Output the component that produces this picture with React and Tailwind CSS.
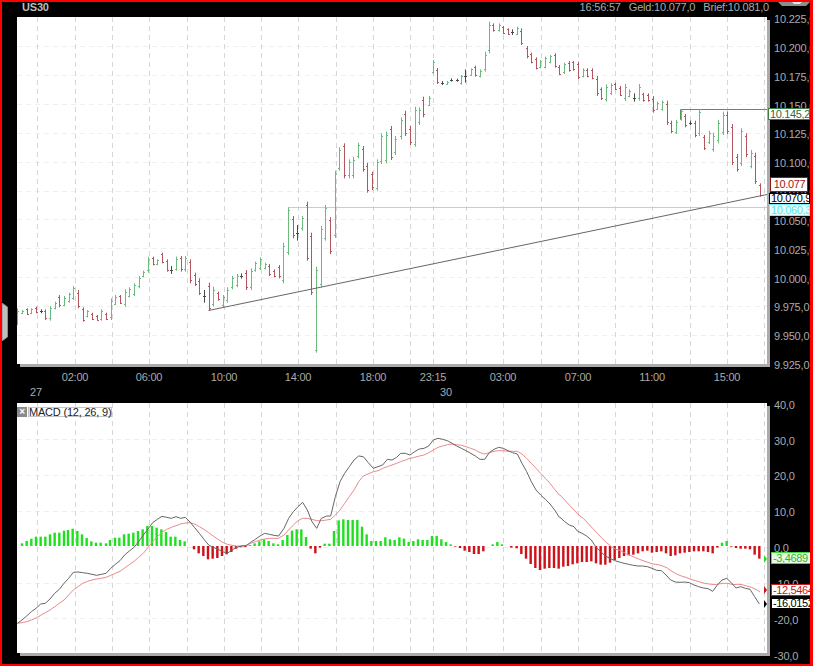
const gridX = [37, 75, 112, 149, 187, 224, 261, 298, 336, 373, 410, 433, 466, 503, 541, 578, 615, 652, 690, 727, 764];
const gridYTop = [46, 75, 104, 133, 162, 191, 219, 248, 277, 306, 335];
const gridYBottom = [439, 475, 511, 547, 583, 618];

// read off the 3x crops: [x, top, bottom, colour]
const barsA = [
  [52,325,375,"g"],[66,330,342,"g"],[80,325,345,"r"],[94,325,342,"g"],[108,320,340,"r"],[122,328,340,"k"],[136,328,360,"r"],[150,318,362,"g"],
  [164,305,328,"g"],[178,285,322,"r"],[192,288,318,"g"],[206,278,308,"g"],[220,258,300,"g"],[234,270,325,"r"],[248,322,365,"r"],[262,330,352,"g"],
  [276,338,360,"r"],[290,345,362,"r"],[304,328,362,"g"],[318,338,360,"r"],[332,295,360,"g"],[346,285,315,"g"],[360,285,312,"r"],[374,268,320,"g"],
  [388,262,292,"g"],[402,250,288,"g"],[416,228,265,"g"],[430,212,232,"g"],[444,170,218,"g"],[458,170,196,"r"],[472,178,196,"g"],[486,158,190,"r"],
  [500,178,215,"r"],[514,198,222,"k"],[528,170,212,"g"],[542,168,215,"r"],[556,168,215,"g"],[570,178,250,"r"],[584,218,258,"r"],[598,235,285,"r"],
  [612,270,308,"k"],[626,248,332,"r"],[640,260,320,"g"],[654,275,302,"r"],[668,285,322,"g"],[682,262,308,"g"],[696,228,268,"g"],[710,222,262,"g"],
  [724,220,236,"k"],[738,210,270,"r"],[752,205,270,"g"],[766,185,215,"g"],[780,172,210,"g"],[794,188,208,"g"],[808,192,228,"r"],[822,208,232,"r"],
  [836,195,235,"r"],[850,128,250,"g"],[864,22,165,"g"],[878,48,115,"r"],[892,75,122,"k"],[906,48,92,"g"],[920,5,182,"r"],[934,98,285,"r"],
  [948,200,458,"g"],[962,78,262,"g"],[976,15,122,"g"],[990,52,162,"r"],
];
const barsB = [
  [194,512,714,"g"],[208,442,512,"g"],[222,430,535,"r"],[236,478,535,"g"],[250,470,535,"g"],[264,428,475,"g"],[278,438,515,"r"],[292,488,578,"r"],
  [306,515,570,"r"],[320,478,572,"g"],[334,400,492,"g"],[348,395,490,"g"],[362,378,480,"r"],[376,408,465,"g"],[392,352,418,"g"],[406,332,408,"r"],
  [420,378,435,"r"],[434,320,440,"g"],[448,322,375,"g"],[460,290,352,"r"],[476,288,318,"g"],[490,180,222,"g"],[502,204,252,"r"],[517,243,255,"k"],
  [532,243,254,"g"],[544,235,245,"k"],[560,236,245,"k"],[574,225,254,"g"],[586,208,248,"k"],[602,205,228,"g"],[616,197,230,"r"],[630,208,232,"g"],
  [644,155,215,"g"],[658,65,160,"g"],[670,70,95,"r"],[686,70,95,"g"],[700,78,102,"r"],[713,85,105,"r"],[727,88,105,"k"],[742,80,105,"g"],
  [754,85,135,"r"],[770,138,175,"r"],[784,158,190,"r"],[797,172,208,"r"],
];
const barsC = [
  [0,180,205,"g"],[16,170,205,"g"],[30,165,190,"g"],[44,160,203,"r"],[58,195,225,"r"],[72,188,222,"g"],[86,183,215,"r"],[100,183,212,"r"],
  [114,185,238,"r"],[128,205,232,"g"],[142,205,232,"r"],[156,205,238,"r"],[170,228,288,"r"],[184,262,300,"r"],[198,253,305,"g"],[212,250,285,"g"],
  [226,248,270,"r"],[240,258,288,"r"],[254,252,303,"g"],[268,268,292,"g"],[282,280,305,"k"],[296,252,302,"g"],[310,278,305,"r"],[324,280,305,"r"],
  [338,288,338,"r"],[352,305,330,"g"],[366,302,332,"g"],[380,302,375,"r"],[394,362,400,"r"],[408,360,402,"g"],[422,328,362,"g"],[436,342,382,"r"],
  [450,362,375,"k"],[464,362,412,"r"],[478,328,408,"g"],[492,405,450,"r"],[506,392,432,"g"],[520,398,455,"g"],[534,360,430,"g"],[548,335,405,"g"],
  [562,335,402,"r"],[576,372,495,"r"],[590,462,515,"r"],[604,385,498,"g"],[618,400,472,"r"],[632,450,505,"g"],[646,458,552,"r"],[660,550,590,"r"],
];

const histA = [
  [66,8],[80,15],[94,22],[108,28],[122,28],[136,28],[150,35],[164,40],[178,40],[192,46],[204,48],[218,52],[232,45],[246,35],[260,24],[274,14],[288,10],[302,10],[318,8],[330,18],
  [345,25],[358,25],[372,35],[386,37],[400,40],[414,45],[428,50],[442,60],[456,60],[470,55],[484,50],[498,42],[512,28],[526,28],[540,18],[554,14],[582,-10],[596,-22],[610,-30],
  [624,-40],[638,-38],[652,-36],[666,-30],[680,-25],[694,-18],[708,-8],[722,-4],[736,-3],[750,3],[764,8],[778,14],[792,20],[806,15],[820,8],[834,5],
];
const histB = [
  [8,18],[22,33],[36,46],[50,50],[64,50],[78,27],[92,-8],[106,-22],[120,-5],[134,7],[148,7],[162,45],[176,77],[190,80],[204,78],[218,78],[232,78],[246,58],[260,35],[274,15],
  [288,15],[302,15],[316,26],[330,20],[344,18],[358,26],[372,22],[386,12],[400,15],[414,20],[428,18],[442,18],[456,30],[470,30],[484,20],[498,12],[512,5],[526,-2],[540,-6],
  [554,-14],[568,-18],[582,-24],[596,-24],[610,-16],[638,5],[652,12],[666,5],[694,-5],[710,-7],[724,-24],[738,-38],[752,-54],[766,-66],[780,-72],[794,-68],[808,-66],[822,-66],[836,-68],
];
const histC = [
  [10,-62],[24,-60],[38,-55],[52,-52],[66,-48],[80,-48],[94,-46],[108,-52],[122,-56],[136,-56],[150,-50],[164,-42],[178,-36],[192,-30],[206,-28],[220,-26],[234,-22],[248,-16],
  [262,-14],[276,-20],[290,-18],[304,-16],[318,-22],[332,-30],[346,-28],[360,-22],[374,-20],[388,-18],[402,-16],[416,-16],[430,-16],[444,-18],[458,-22],[472,-5],[486,10],[500,15],
  [514,-2],[528,-6],[542,-8],[556,-8],[570,-10],[584,-26],[598,-38],
];

const macdA = "52,580 66,570 80,558 94,545 108,535 122,522 136,520 150,507 164,490 178,478 192,460 206,445 220,427 234,426 248,428 262,430 276,433 290,436 304,433 318,430 332,415 346,403 360,392 374,375 388,363 402,352 416,335 430,315 444,297 458,278 472,268 486,259 500,262 514,265 528,260 542,265 556,262 570,276 584,293 598,310 612,328 626,345 640,352 654,358 668,365 682,370 696,360 710,352 724,348 738,347 752,337 766,328 780,318 794,310 808,313 822,316 836,318";
const macdB = "0,312 12,295 26,265 40,245 54,230 68,217 82,240 96,275 110,295 124,265 140,258 152,258 166,200 180,155 194,130 208,110 222,90 236,78 250,80 264,97 280,115 294,110 308,105 322,88 336,90 350,82 362,70 376,70 390,75 404,65 418,57 432,55 446,48 460,30 474,25 488,28 502,32 516,40 530,48 544,55 558,62 572,70 586,78 600,88 614,88 628,68 642,58 656,52 670,55 684,62 698,68 712,72 726,100 740,125 754,155 768,180 782,195 796,208 810,222 824,240 838,262";
const macdC = "0,262 14,275 28,285 42,290 52,303 66,310 80,318 94,330 108,352 122,365 136,378 150,385 164,392 178,396 192,400 206,403 220,406 234,408 248,408 262,410 276,415 290,421 304,422 318,435 332,450 346,456 360,457 374,456 388,458 402,465 416,470 430,474 444,476 458,484 472,465 486,450 500,445 514,458 528,474 542,470 556,475 570,478 584,500 598,522";
const signalA = "52,580 66,578 80,575 94,570 108,564 122,556 136,548 150,540 164,530 178,520 192,510 206,495 220,480 234,470 248,460 262,454 276,450 290,447 304,445 318,442 332,436 346,430 360,424 374,414 388,404 402,394 416,382 430,370 444,352 458,335 472,320 486,307 500,298 514,292 528,287 542,282 556,279 570,278 584,282 598,290 612,298 626,308 640,318 654,328 668,337 682,343 696,346 710,348 724,348 738,347 752,340 766,335 780,330 794,327 808,325 822,325 836,325";
const signalB = "0,322 12,315 26,300 40,285 54,272 68,265 82,265 96,268 110,272 124,272 140,270 152,268 166,255 180,240 194,220 208,200 222,180 236,155 250,138 264,132 280,125 294,122 308,115 322,110 336,105 350,100 362,95 376,90 390,85 404,82 418,78 432,75 446,68 460,60 474,52 488,48 502,44 516,42 530,44 544,46 558,50 572,55 586,60 600,68 614,72 628,68 642,64 656,62 670,62 684,64 698,64 712,64 726,72 740,85 754,100 768,115 782,130 796,145 810,160 824,178 838,195";
const signalC = "0,195 14,210 28,225 42,240 56,255 70,265 84,280 98,295 112,310 126,325 140,338 154,350 168,358 182,362 196,370 210,376 224,382 238,388 252,393 266,398 280,402 294,404 308,408 322,414 336,424 350,432 364,438 378,442 392,448 406,452 420,456 434,460 448,462 462,464 476,462 490,460 504,460 518,464 532,463 546,464 560,468 574,472 588,478 600,486";

const barColors = { g: "#6cba7c", r: "#b4555e", k: "#4a4a4a" };

function toPage(list, ox, oy) {
  return list.split(" ").map((pair) => {
    const [x, y] = pair.split(",").map(Number);
    return `${ox + x / 3},${oy + y / 3}`;
  });
}

function Grid({ ys, top, bottom }) {
  return (
    <g fill="none" strokeWidth="1" strokeDasharray="5 4" shapeRendering="crispEdges">
      {ys.map((y) => (
        <line key={y} x1="17" x2="767" y1={y + 0.5} y2={y + 0.5} stroke="#efefef" />
      ))}
      {gridX.map((x) => (
        <line key={x} x1={x + 0.5} x2={x + 0.5} y1={top} y2={bottom} stroke="#d6d6d6" />
      ))}
    </g>
  );
}

function Bars({ list, ox, oy }) {
  return list.map(([zx, zt, zb, c]) => {
    const x = Math.round(ox + zx / 3) + 0.5;
    const top = oy + zt / 3;
    const bottom = oy + zb / 3;
    const wick = Math.min(3, (bottom - top) * 0.15);
    const open = c === "g" ? bottom - wick : c === "r" ? top + wick : (top + bottom) / 2;
    const close = c === "g" ? top + wick : c === "r" ? bottom - wick : (top + bottom) / 2;
    return (
      <path
        key={`${ox}-${zx}`}
        d={`M${x} ${top}V${bottom}M${x - 1.5} ${Math.round(open) + 0.5}H${x}M${x} ${Math.round(close) + 0.5}H${x + 1.5}`}
        stroke={barColors[c]}
        fill="none"
      />
    );
  });
}

function Hist({ list, ox }) {
  return list.map(([zx, h]) => {
    const px = Math.abs(h) / 3;
    return (
      <rect
        key={`${ox}-${zx}`}
        x={ox + zx / 3 - 1.2}
        y={h > 0 ? 546 - px : 546}
        width="2.4"
        height={px}
        fill={h > 0 ? "#1fe01f" : "#cf1018"}
      />
    );
  });
}

function PriceChart() {
  return (
    <svg viewBox="17 17 750 347" className="block h-full w-full">
      <Grid ys={gridYTop} top={17} bottom={364} />
      <path d="M288.5 238V207.5H767" fill="none" stroke="#7aeef4" />
      <path d="M680.5 120V109.5H767" fill="none" stroke="#4d9a58" />
      <Bars list={barsA} ox={0} oy={200} />
      <Bars list={barsB} ox={270} oy={0} />
      <Bars list={barsC} ox={540} oy={0} />
      <line x1="208.5" y1="310.5" x2="767" y2="194.5" stroke="#666666" />
    </svg>
  );
}

function MacdChart() {
  const macd = [...toPage(macdA, 0, 430), ...toPage(macdB, 280, 430), ...toPage(macdC, 560, 430)].join(" ");
  const signal = [...toPage(signalA, 0, 430), ...toPage(signalB, 280, 430), ...toPage(signalC, 560, 430)].join(" ");
  return (
    <svg viewBox="17 403 750 250" className="block h-full w-full">
      <Grid ys={gridYBottom} top={403} bottom={653} />
      <Hist list={histA} ox={0} />
      <Hist list={histB} ox={280} />
      <Hist list={histC} ox={560} />
      <polyline points={signal} fill="none" stroke="#ea8a8a" />
      <polyline points={macd} fill="none" stroke="#666666" />
      <path d="M764 555l3 4-3 4z" fill="#22dd22" />
      <path d="M764 586l3 4-3 4z" fill="#cc1111" />
      <path d="M764 600l3 4-3 4z" fill="#000000" />
    </svg>
  );
}

const priceLabels = ["10.225,0", "10.200,0", "10.175,0", "10.150,0", "10.125,0", "10.100,0", "10.075,0", "10.050,0", "10.025,0", "10.000,0", "9.975,0", "9.950,0", "9.925,0"];
const macdLabels = ["40,0", "30,0", "20,0", "10,0", "0,0", "-10,0", "-20,0", "-30,0"];

function Tag({ className, children }) {
  return (
    <div className={`absolute flex items-center overflow-hidden whitespace-nowrap border pl-[1px] text-[11px] tracking-[-0.35px] ${className}`}>
      {children}
    </div>
  );
}

export default function App() {
  return (
    <div className="relative flex h-[666px] w-[813px] flex-col overflow-hidden border-t-2 border-r-[3px] border-b-2 border-l-2 border-[#ff0000] bg-black font-['Liberation_Sans',Arial,sans-serif] text-[11px] tracking-[-0.2px] text-[#ababab]">
      <header className="flex h-[15px] shrink-0 justify-between overflow-hidden pr-[41px] pl-5 leading-[12px]">
        <span className="-mt-[1px] font-bold text-[#bdbdbd]">US30</span>
        <div className="-mt-[1px] flex gap-[8px]">
          <span>16:56:57</span>
          <span>Geld:10.077,0</span>
          <span>Brief:10.081,0</span>
        </div>
      </header>

      <div className="flex h-[350px] shrink-0 pl-[15px]">
        <div className="h-[347px] w-[750px] shrink-0 bg-white shadow-[3px_3px_0_#ababab]">
          <PriceChart />
        </div>
        <div className="ml-[7px] -mt-[12px] h-fit w-[36px] shrink-0">
          {priceLabels.map((label) => (
            <div key={label} className="flex h-[28.83px] items-center whitespace-nowrap">
              {label}
            </div>
          ))}
        </div>
      </div>

      <div className="h-[36px] shrink-0 pt-[3px] leading-[15px]">
        <div className="flex text-center">
          <span className="ml-[53px] w-10">02:00</span>
          <span className="ml-[34px] w-10">06:00</span>
          <span className="ml-[35px] w-10">10:00</span>
          <span className="ml-[34px] w-10">14:00</span>
          <span className="ml-[35px] w-10">18:00</span>
          <span className="ml-[20px] w-10">23:15</span>
          <span className="ml-[30px] w-10">03:00</span>
          <span className="ml-[35px] w-10">07:00</span>
          <span className="ml-[34px] w-10">11:00</span>
          <span className="ml-[35px] w-10">15:00</span>
        </div>
        <div className="flex text-center">
          <span className="ml-[24px] w-5">27</span>
          <span className="ml-[390px] w-5">30</span>
        </div>
      </div>

      <div className="flex h-[253px] shrink-0 pl-[15px]">
        <div className="relative h-[250px] w-[750px] shrink-0 bg-white shadow-[3px_3px_0_#ababab]">
          <MacdChart />
          <div className="absolute top-[4px] left-0 flex h-[10px] items-center">
            <div className="flex h-[10px] w-[10px] items-center justify-center bg-[#8a8a8a] text-[10px] leading-none font-bold text-white">×</div>
            <span className="ml-[1px] h-[10px] border border-[#c4c4c4] bg-white text-[11px] leading-[8px] text-[#222222]">MACD (12, 26, 9)</span>
          </div>
        </div>
        <div className="ml-[7px] -mt-[16px] h-fit shrink-0">
          {macdLabels.map((label) => (
            <div key={label} className="flex h-[35.9px] items-center whitespace-nowrap">
              {label}
            </div>
          ))}
        </div>
      </div>

      {/* value tags that sit over the axis */}
      <Tag className="top-[106px] left-[766px] h-[12px] w-[42px] border-[#3c7d46] bg-white text-[#2f6b39]">10.145,2</Tag>
      <Tag className="top-[175px] left-[768px] h-[15px] w-[38px] justify-center border-[#8b1a1a] bg-white text-[#a01818]">10.077</Tag>
      <Tag className="top-[191px] left-[767px] h-[11px] w-[41px] border-black bg-white text-black">10.070,9</Tag>
      <Tag className="top-[202px] left-[767px] h-[12px] w-[41px] border-[#7af0f4] bg-[#eafdfd] text-[#5ce4ea]">10.060,3</Tag>
      <Tag className="top-[550px] left-[769px] h-[12px] w-[40px] border-[#3fdc3f] bg-[#e4fbe4] text-[#2fb42f]">-3,4689</Tag>
      <Tag className="top-[582px] left-[769px] h-[12px] w-[40px] border-[#c41c1c] bg-white text-[#c41c1c]">-12,5464</Tag>
      <Tag className="top-[596px] left-[769px] h-[11px] w-[40px] border-black bg-white text-black">-16,0152</Tag>

      {/* resize handles of the window */}
      <svg viewBox="0 0 32 5" className="absolute top-0 left-[776px] h-[5px] w-[32px]">
        <path d="M0 0H32L28 4H4Z" fill="#8d8d8d" />
        <path d="M14 0H24L22 2H16Z" fill="#e8e8e8" />
      </svg>
      <svg viewBox="0 0 6 38" className="absolute top-[301px] left-0 h-[38px] w-[6px]">
        <path d="M0 0L5.5 4V34L0 38Z" fill="#bfbfbf" stroke="#8a8a8a" />
      </svg>
    </div>
  );
}
